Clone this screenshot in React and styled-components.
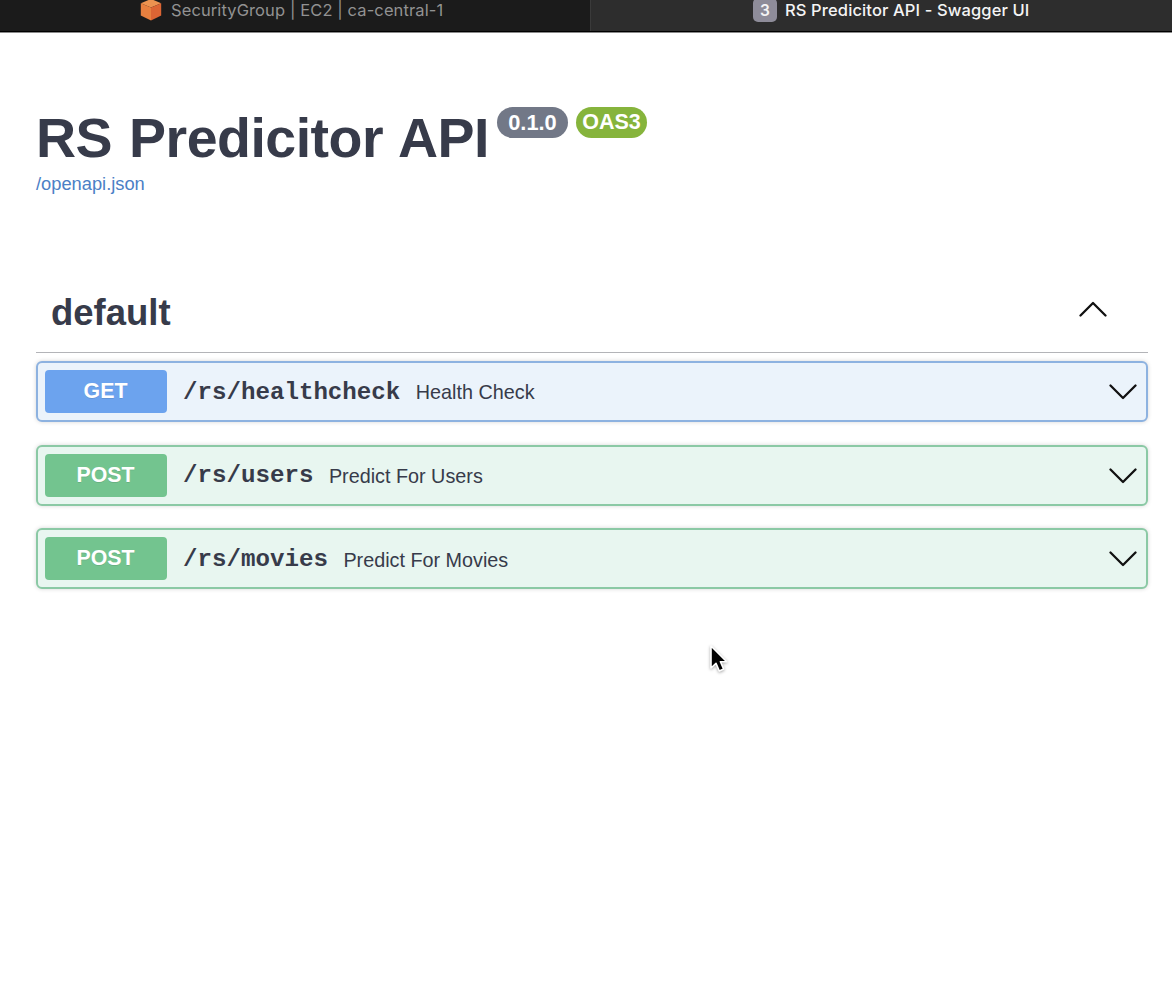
import React from "react";
import styled, { createGlobalStyle } from "styled-components";

const GlobalStyle = createGlobalStyle`
  * { box-sizing: border-box; }
  body {
    margin: 0;
    background: #fff;
    color: #373b4a;
    font-family: "Liberation Sans", Arial, sans-serif;
    overflow: hidden;
  }
`;

const Page = styled.div`
  height: 1008px;
  overflow: hidden;
`;

const TabBar = styled.div`
  display: grid;
  grid-template-columns: 590px 1fr;
  height: 33px;
  background: #000;
  border-bottom: 1px solid #8a8a8a;
`;

const Tab = styled.div`
  display: flex;
  align-items: center;
  height: 31px;
  padding: 0 0 11px ${(p) => (p.$active ? 162 : 140)}px;
  gap: ${(p) => (p.$active ? 8 : 9)}px;
  color: ${(p) => (p.$active ? "#f4f4f4" : "#929292")};
  background: ${(p) => (p.$active ? "#2d2d2d" : "#1b1b1b")};
  border-left: ${(p) => (p.$active ? "1px solid #3a3a3a" : "none")};
  font-family: Inter, sans-serif;
  font-size: 16.5px;
  font-weight: ${(p) => (p.$active ? 500 : 400)};
  letter-spacing: ${(p) => p.$spacing}px;
  line-height: 20px;
  white-space: nowrap;
`;

const CubeIcon = styled.svg`
  flex: none;
  width: 22px;
  height: 22px;
`;

const TabBadge = styled.span`
  flex: none;
  width: 24px;
  height: 24px;
  border-radius: 5px;
  background: #8e8c99;
  font-size: 15.5px;
  font-weight: 600;
  line-height: 26px;
  letter-spacing: 0;
  text-align: center;
`;

const Main = styled.main`
  padding: 74px 24px 0 36px;
`;

const TitleRow = styled.div`
  display: flex;
  align-items: flex-start;
  height: 64px;
`;

const Title = styled.h1`
  margin: 0 9px 0 0;
  width: 452px;
  font-size: 55.5px;
  line-height: 62px;
  letter-spacing: -0.5px;
  word-spacing: 2px;
  white-space: nowrap;
`;

const VersionBadge = styled.span`
  width: 71px;
  height: 31px;
  margin-right: 8px;
  border-radius: 16px;
  background: ${(p) => p.$color};
  color: #fff;
  font-size: ${(p) => p.$size}px;
  font-weight: 700;
  line-height: 31px;
  text-align: center;
`;

const SpecLink = styled.a`
  display: block;
  margin-top: 2px;
  color: #4b80c6;
  font-size: 18.3px;
  line-height: 22px;
  text-decoration: none;
`;

const SectionHeader = styled.div`
  display: flex;
  align-items: center;
  justify-content: space-between;
  height: 83px;
  margin-top: 75px;
  padding: 0 41px 0 15px;
  border-bottom: 1.5px solid #b3b4b8;
`;

const SectionTitle = styled.h2`
  margin: 0;
  padding-top: 3px;
  font-size: 36.5px;
  line-height: 42px;
`;

const Arrow = styled.svg`
  flex: none;
  width: 28px;
  height: 16px;
  fill: none;
  stroke: #111;
  stroke-width: 2.3;
  stroke-linecap: round;
  stroke-linejoin: round;
`;

const SectionArrow = styled(Arrow)`
  margin-bottom: 5px;
`;

const RowArrow = styled(Arrow)`
  margin-top: 1px;
`;

const palette = {
  GET: { main: "#6ca3ee", border: "#8db2e0", back: "#ebf3fb" },
  POST: { main: "#73c48f", border: "#8bc9a5", back: "#e8f6f0" },
};

const Operations = styled.div`
  display: flex;
  flex-direction: column;
  gap: 22.7px;
  padding-top: 8px;
`;

const Operation = styled.div`
  display: flex;
  align-items: center;
  height: 61px;
  padding: 0 9px 0 6.5px;
  border: 2px solid ${(p) => palette[p.$method].border};
  border-radius: 6px;
  background: ${(p) => palette[p.$method].back};
  box-shadow: 0 0 4px rgba(0, 0, 0, 0.17);
`;

const Method = styled.span`
  width: 122px;
  height: 43px;
  margin-right: 16.5px;
  border-radius: 4px;
  background: ${(p) => palette[p.$method].main};
  color: #fff;
  font-size: 21.3px;
  font-weight: 700;
  line-height: 43px;
  text-align: center;
  text-shadow: 0 1px 0 rgba(0, 0, 0, 0.1);
`;

const Path = styled.span`
  padding-top: 2px;
  font-family: "Liberation Mono", "Courier New", monospace;
  font-size: 24.15px;
  font-weight: 700;
  line-height: 30px;
`;

const Summary = styled.span`
  flex: 1;
  margin-left: 15.5px;
  padding-top: 1.5px;
  font-size: 19.8px;
  line-height: 24px;
`;

const Cursor = styled.svg`
  position: absolute;
  left: 706px;
  top: 643px;
  width: 24px;
  height: 34px;
  filter: drop-shadow(0 1px 1.5px rgba(0, 0, 0, 0.35));
`;

const operations = [
  { method: "GET", path: "/rs/healthcheck", summary: "Health Check" },
  { method: "POST", path: "/rs/users", summary: "Predict For Users" },
  { method: "POST", path: "/rs/movies", summary: "Predict For Movies" },
];

export default function App() {
  return (
    <Page>
      <GlobalStyle />
      <TabBar>
        <Tab $spacing={0.1}>
          <CubeIcon viewBox="0 0 22 22">
            <path d="M11 0 21.2 4.2 11 8.6.8 4.2Z" fill="#ec9350" />
            <path d="M.8 4.2 11 8.6V21.5L.8 16.5Z" fill="#e7803f" />
            <path d="M21.2 4.2 11 8.6v12.9l10.2-5Z" fill="#dc6534" />
          </CubeIcon>
          <span>SecurityGroup | EC2 | ca-central-1</span>
        </Tab>
        <Tab $active $spacing={0.12}>
          <TabBadge>3</TabBadge>
          <span>RS Predicitor API - Swagger UI</span>
        </Tab>
      </TabBar>
      <Main>
        <TitleRow>
          <Title>RS Predicitor API</Title>
          <VersionBadge $color="#727887" $size={21.8}>0.1.0</VersionBadge>
          <VersionBadge $color="#86b43c" $size={21.5}>OAS3</VersionBadge>
        </TitleRow>
        <SpecLink>/openapi.json</SpecLink>
        <SectionHeader>
          <SectionTitle>default</SectionTitle>
          <SectionArrow viewBox="0 0 28 16">
            <path d="M1.5 14.5 14 2l12.5 12.5" />
          </SectionArrow>
        </SectionHeader>
        <Operations>
          {operations.map((op) => (
            <Operation key={op.path} $method={op.method}>
              <Method $method={op.method}>{op.method}</Method>
              <Path>{op.path}</Path>
              <Summary>{op.summary}</Summary>
              <RowArrow viewBox="0 0 28 16">
                <path d="M1.5 1.5 14 14 26.5 1.5" />
              </RowArrow>
            </Operation>
          ))}
        </Operations>
      </Main>
      <Cursor viewBox="0 0 24 34">
        <path
          d="M5 3v22l5-4.6 3.3 7.6 4.4-1.9-3.3-7.4h6.3Z"
          fill="#000"
          stroke="#fff"
          strokeWidth="1.6"
          strokeLinejoin="round"
        />
      </Cursor>
    </Page>
  );
}
